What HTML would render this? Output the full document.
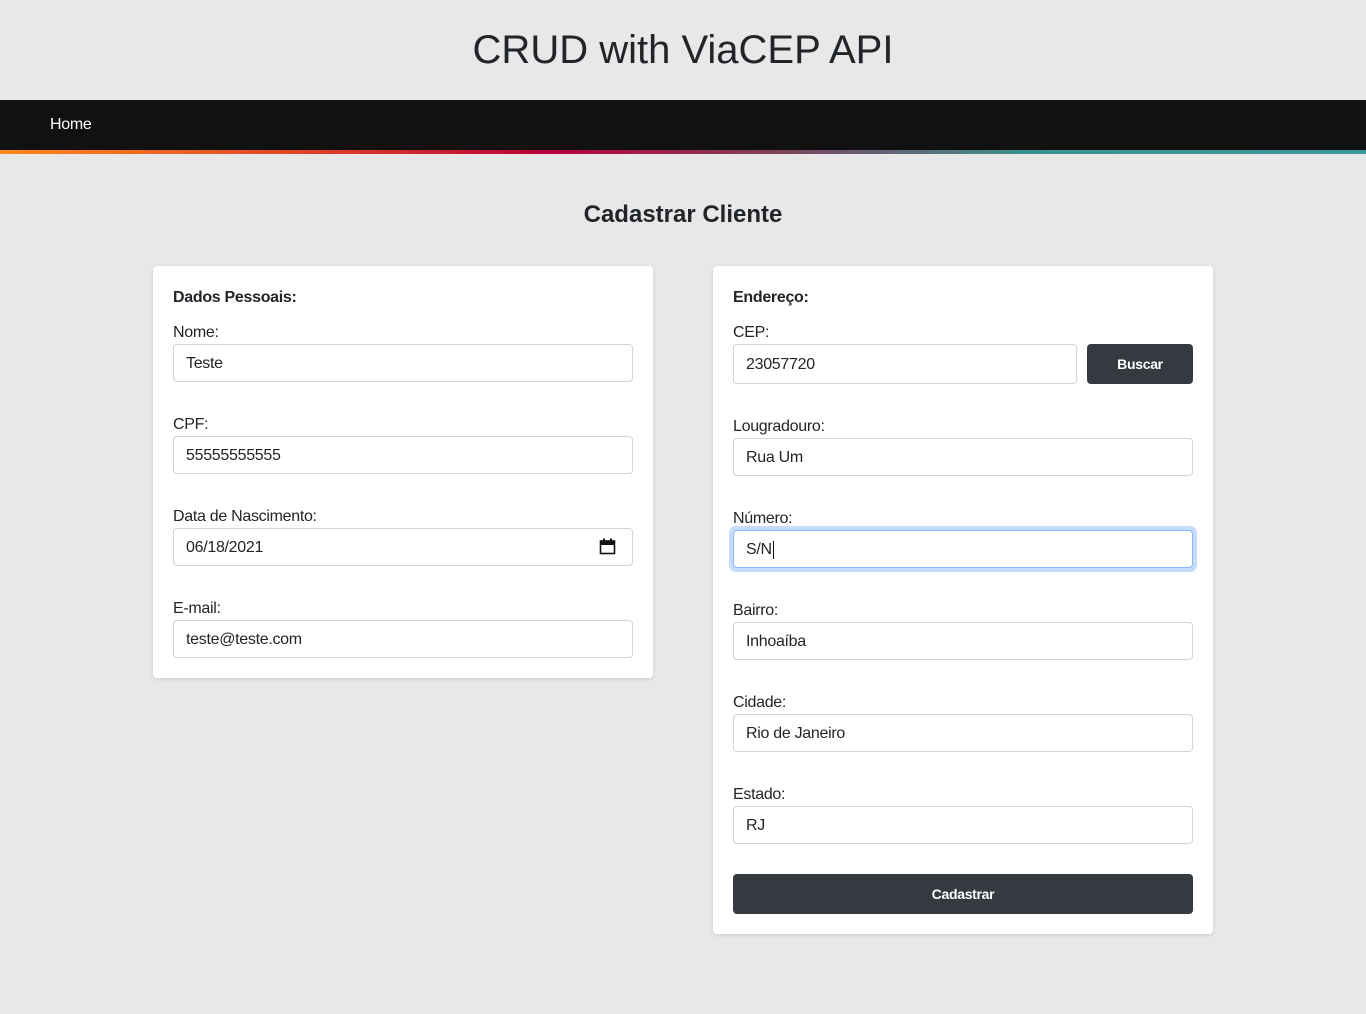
<!DOCTYPE html>
<html><head><meta charset="utf-8"><style>
*{box-sizing:border-box;margin:0;padding:0}
body{width:1366px;height:1014px;background:#e8e8e8;font-family:"Liberation Sans",sans-serif;color:#212529;position:relative;overflow:hidden}
.a{position:absolute}
h1{position:absolute;left:0;width:1366px;top:26px;text-align:center;font-weight:400;font-size:40px;line-height:48px}
.nav{left:0;top:100px;width:1366px;height:50px;background:#111}
.grad{left:0;top:150px;width:1366px;height:4px;background:linear-gradient(90deg,#ff8a1c 0%,#d93a2a 25%,#bb0038 40%,#7a4660 58%,#3d9090 75%,#3a9a9a 100%)}
.home{left:50px;top:116px;color:#fff;font-size:16px;line-height:18px;letter-spacing:-0.3px}
h2{position:absolute;left:0;width:1366px;top:201px;text-align:center;font-size:24px;line-height:28px;font-weight:700}
.card{background:#fff;border-radius:4px;box-shadow:0 1px 4px rgba(0,0,0,.12)}
.lab{font-size:16px;line-height:18px;letter-spacing:-0.3px}
.b{font-weight:700}
.in{border:1px solid #ced4da;border-radius:4px;background:#fff;font-size:16px;padding-left:12px;padding-top:1px;display:flex;align-items:center;letter-spacing:-0.3px}
.btn{background:#343a40;color:#fff;border-radius:4px;font-size:14px;font-weight:700;display:flex;align-items:center;justify-content:center;letter-spacing:-0.3px}
</style></head><body>
<h1>CRUD with ViaCEP API</h1>
<div class="a nav"></div><div class="a grad"></div>
<div class="a home">Home</div>
<h2>Cadastrar Cliente</h2>

<div class="a card" style="left:153px;top:266px;width:500px;height:412px"></div>
<div class="a lab b" style="left:173px;top:289px">Dados Pessoais:</div>
<div class="a lab" style="left:173px;top:324px">Nome:</div>
<div class="a in" style="left:173px;top:344px;width:460px;height:38px">Teste</div>
<div class="a lab" style="left:173px;top:416px">CPF:</div>
<div class="a in" style="left:173px;top:436px;width:460px;height:38px">55555555555</div>
<div class="a lab" style="left:173px;top:508px">Data de Nascimento:</div>
<div class="a in" style="left:173px;top:528px;width:460px;height:38px">06/18/2021
<svg style="position:absolute;left:425px;top:9px" width="17" height="17" viewBox="0 0 17 17"><rect x="1.5" y="3" width="14" height="12.5" fill="none" stroke="#111" stroke-width="1.6"/><rect x="1.5" y="3" width="14" height="4" fill="#111"/><rect x="4" y="0.5" width="2" height="3" fill="#111"/><rect x="11" y="0.5" width="2" height="3" fill="#111"/></svg></div>
<div class="a lab" style="left:173px;top:600px">E-mail:</div>
<div class="a in" style="left:173px;top:620px;width:460px;height:38px">teste@teste.com</div>

<div class="a card" style="left:713px;top:266px;width:500px;height:668px"></div>
<div class="a lab b" style="left:733px;top:289px">Endereço:</div>
<div class="a lab" style="left:733px;top:324px">CEP:</div>
<div class="a in" style="left:733px;top:344px;width:344px;height:40px">23057720</div>
<div class="a btn" style="left:1087px;top:344px;width:106px;height:40px">Buscar</div>
<div class="a lab" style="left:733px;top:418px">Lougradouro:</div>
<div class="a in" style="left:733px;top:438px;width:460px;height:38px">Rua Um</div>
<div class="a lab" style="left:733px;top:510px">Número:</div>
<div class="a" style="left:729px;top:526px;width:468px;height:46px;border-radius:7px;background:#c6dcfb"></div>
<div class="a in" style="left:733px;top:530px;width:460px;height:38px;border-color:#86b7fe">S/N<span style="display:inline-block;width:1px;height:18px;background:#111;margin-left:1px"></span></div>
<div class="a lab" style="left:733px;top:602px">Bairro:</div>
<div class="a in" style="left:733px;top:622px;width:460px;height:38px">Inhoaíba</div>
<div class="a lab" style="left:733px;top:694px">Cidade:</div>
<div class="a in" style="left:733px;top:714px;width:460px;height:38px">Rio de Janeiro</div>
<div class="a lab" style="left:733px;top:786px">Estado:</div>
<div class="a in" style="left:733px;top:806px;width:460px;height:38px">RJ</div>
<div class="a btn" style="left:733px;top:874px;width:460px;height:40px">Cadastrar</div>
</body></html>
